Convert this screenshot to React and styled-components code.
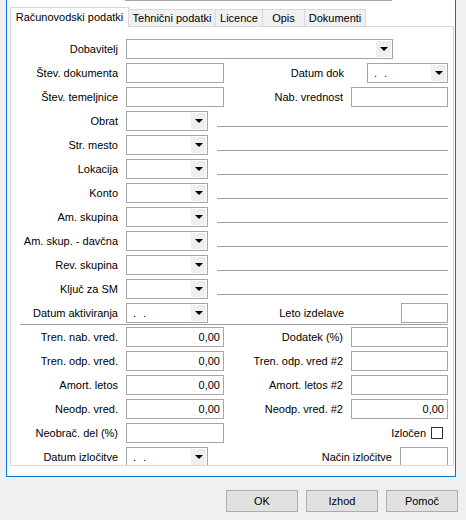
import styled, { createGlobalStyle } from 'styled-components'

const GlobalStyle = createGlobalStyle`
  html, body {
    margin: 0;
    padding: 0;
    background: #f0f0f0;
  }
  body {
    font-family: "Liberation Sans", Arial, sans-serif;
    font-size: 11px;
    color: #000;
  }
`

const Page = styled.div`
  width: 466px;
  height: 520px;
  display: flex;
  flex-direction: column;
  overflow: hidden;
`

const Frame = styled.div`
  margin-left: 6px;
  width: 450px;
  box-sizing: border-box;
  border: 1px solid #0078d7;
  border-top: none;
  background: #fff;
  padding: 0 1px 10px 3px;
`

const TopStrip = styled.div`
  margin-left: 115px;
  width: 267px;
  height: 1px;
  background: #a6a6a6;
`

const TabStrip = styled.div`
  display: flex;
  align-items: flex-end;
  height: 19px;
  margin-top: 6px;
`

const Tab = styled.div`
  position: relative;
  box-sizing: border-box;
  width: ${p => p.$w}px;
  height: ${p => (p.$active ? 20 : 17)}px;
  margin-bottom: ${p => (p.$active ? -1 : 0)}px;
  margin-left: ${p => (p.$first ? 0 : -1)}px;
  z-index: ${p => (p.$active ? 2 : 1)};
  border: 1px solid #d9d9d9;
  border-bottom: none;
  background: ${p => (p.$active ? '#fff' : '#f0f0f0')};
  display: flex;
  align-items: center;
  justify-content: center;
  white-space: nowrap;
  padding-bottom: ${p => (p.$active ? 2 : 0)}px;
`

const Panel = styled.div`
  position: relative;
  box-sizing: border-box;
  height: 440px;
  border: 1px solid #d9d9d9;
  border-right-color: #d0d0d0;
  background: #fff;
  padding-top: 12px;
  overflow: hidden;
`

const Row = styled.div`
  display: flex;
  align-items: center;
  height: 20px;
  margin-bottom: 4px;
  padding-right: 5px;
`

const Label = styled.div`
  flex-shrink: 0;
  width: 107px;
  margin-right: 8px;
  text-align: right;
  white-space: nowrap;
`

const RightLabel = styled.div`
  flex: 1;
  text-align: right;
  white-space: nowrap;
  padding-right: ${p => p.$gap ?? 8}px;
`

const Field = styled.div`
  flex-shrink: 0;
  box-sizing: border-box;
  width: ${p => p.$w}px;
  height: 20px;
  border: 1px solid #a5a5a5;
  background: #fff;
  padding: 0 3px;
  line-height: 18px;
  text-align: right;
`

const Combo = styled.div`
  flex-shrink: 0;
  box-sizing: border-box;
  width: ${p => p.$w}px;
  height: 20px;
  border: 1px solid #a5a5a5;
  background: #fff;
  display: flex;
  align-items: stretch;
  padding: 1px;
`

const ComboValue = styled.div`
  flex: 1;
  padding-left: 5px;
  line-height: 16px;
  letter-spacing: 2px;
`

const DropButton = styled.div`
  width: 15px;
  background: #efefef;
  display: flex;
  align-items: center;
  justify-content: center;
`

const DescLine = styled.div`
  flex: 1;
  align-self: flex-start;
  height: 16px;
  margin-left: 9px;
  border-bottom: 1px solid #a0a0a0;
  box-sizing: border-box;
`

const Separator = styled.div`
  height: 1px;
  margin: -3px 5px 2px 9px;
  background: #a0a0a0;
`

const CheckBox = styled.div`
  box-sizing: border-box;
  width: 12px;
  height: 12px;
  border: 1px solid #333;
  background: #fff;
  margin-right: 5px;
`

const ButtonBar = styled.div`
  display: flex;
  justify-content: flex-end;
  gap: 8px;
  padding-right: 8px;
  margin-top: 13px;
`

const Button = styled.div`
  box-sizing: border-box;
  width: 72px;
  height: 22px;
  border: 1px solid #adadad;
  background: #e1e1e1;
  display: flex;
  align-items: center;
  justify-content: center;
`

function Arrow() {
  return (
    <svg width="8" height="4" viewBox="0 0 8 4">
      <polygon points="0,0 8,0 4,4" fill="#000" />
    </svg>
  )
}

function ComboBox({ w, value }) {
  return (
    <Combo $w={w}>
      <ComboValue>{value}</ComboValue>
      <DropButton>
        <Arrow />
      </DropButton>
    </Combo>
  )
}

const tabs = [
  { name: 'Računovodski podatki', w: 119 },
  { name: 'Tehnični podatki', w: 88 },
  { name: 'Licence', w: 48 },
  { name: 'Opis', w: 43 },
  { name: 'Dokumenti', w: 62 },
]

const lookups = [
  'Obrat',
  'Str. mesto',
  'Lokacija',
  'Konto',
  'Am. skupina',
  'Am. skup. - davčna',
  'Rev. skupina',
  'Ključ za SM',
]

const values = [
  { left: 'Tren. nab. vred.', right: 'Dodatek (%)', rv: '' },
  { left: 'Tren. odp. vred.', right: 'Tren. odp. vred #2', rv: '' },
  { left: 'Amort. letos', right: 'Amort. letos #2', rv: '' },
  { left: 'Neodp. vred.', right: 'Neodp. vred. #2', rv: '0,00' },
]

export default function App() {
  return (
    <Page>
      <GlobalStyle />
      <Frame>
        <TopStrip />
        <TabStrip>
          {tabs.map((t, i) => (
            <Tab key={t.name} $w={t.w} $active={i === 0} $first={i === 0}>
              {t.name}
            </Tab>
          ))}
        </TabStrip>
        <Panel>
          <Row>
            <Label>Dobavitelj</Label>
            <ComboBox w={267} />
          </Row>
          <Row>
            <Label>Štev. dokumenta</Label>
            <Field $w={98} />
            <RightLabel $gap={23}>Datum dok</RightLabel>
            <ComboBox w={81} value=". ." />
          </Row>
          <Row>
            <Label>Štev. temeljnice</Label>
            <Field $w={98} />
            <RightLabel>Nab. vrednost</RightLabel>
            <Field $w={97} />
          </Row>
          {lookups.map(name => (
            <Row key={name}>
              <Label>{name}</Label>
              <ComboBox w={82} />
              <DescLine />
            </Row>
          ))}
          <Row>
            <Label>Datum aktiviranja</Label>
            <ComboBox w={82} value=". ." />
            <RightLabel $gap={57}>Leto izdelave</RightLabel>
            <Field $w={47} />
          </Row>
          <Separator />
          {values.map(v => (
            <Row key={v.left}>
              <Label>{v.left}</Label>
              <Field $w={98}>0,00</Field>
              <RightLabel>{v.right}</RightLabel>
              <Field $w={97}>{v.rv}</Field>
            </Row>
          ))}
          <Row>
            <Label>Neobrač. del (%)</Label>
            <Field $w={98} />
            <RightLabel $gap={5}>Izločen</RightLabel>
            <CheckBox />
          </Row>
          <Row>
            <Label>Datum izločitve</Label>
            <ComboBox w={82} value=". ." />
            <RightLabel>Način izločitve</RightLabel>
            <Field $w={48} />
          </Row>
        </Panel>
      </Frame>
      <ButtonBar>
        <Button>OK</Button>
        <Button>Izhod</Button>
        <Button>Pomoč</Button>
      </ButtonBar>
    </Page>
  )
}
